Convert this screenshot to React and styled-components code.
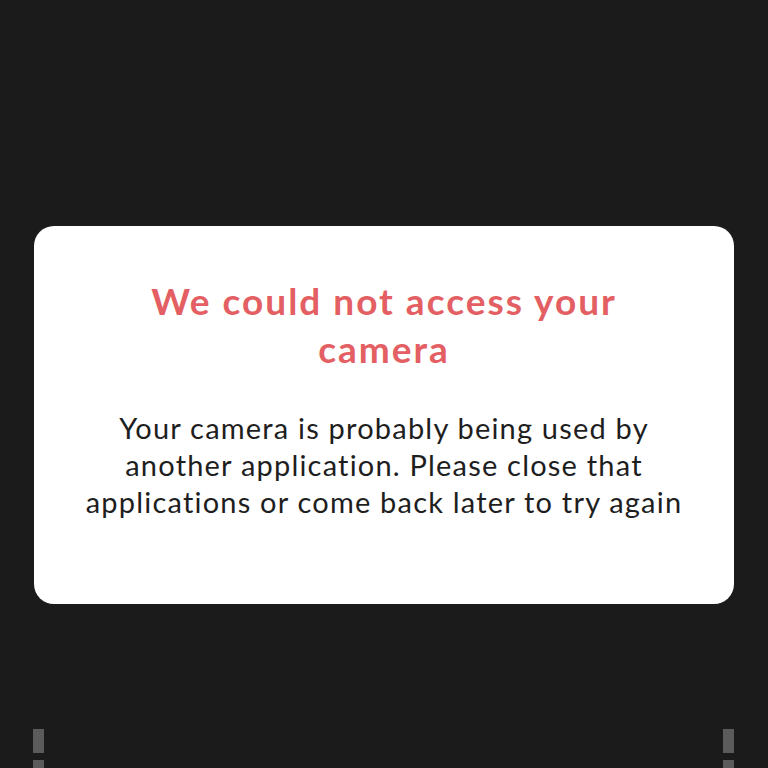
import React from 'react'
import styled, { createGlobalStyle } from 'styled-components'

const GlobalStyle = createGlobalStyle`
    html, body {
        margin: 0;
        padding: 0;
        background: #1b1b1b;
    }
`

const Screen = styled.main`
    height: 768px;
    overflow: hidden;
    background: #1b1b1b;
    display: flex;
    flex-direction: column;
    padding: 226px 34px 0 34px;
    box-sizing: border-box;
    font-family: Lato, 'Open Sans', sans-serif;
`

const Card = styled.section`
    flex-shrink: 0;
    background: #ffffff;
    border-radius: 20px;
    height: 378px;
    box-sizing: border-box;
    padding: 51px 0 0 0;
    text-align: center;
`

const Title = styled.h2`
    margin: 0;
    color: #e35f63;
    font-size: 37px;
    font-weight: 700;
    line-height: 48px;
    letter-spacing: 2px;
`

const Message = styled.p`
    margin: 36px 0 0 0;
    color: #1e1e1e;
    font-size: 29px;
    font-weight: 400;
    line-height: 37px;
    letter-spacing: 1.2px;
`

const GuideRow = styled.div`
    flex-shrink: 0;
    display: flex;
    justify-content: space-between;
    margin-top: 125px;
`

const Guide = styled.div`
    display: flex;
    flex-direction: column;
    gap: 7px;
    margin-left: ${props => props.$left ? '-1px' : '0'};
`

const Dash = styled.span`
    display: block;
    width: 11px;
    height: 24px;
    background: #5b5b5b;
`

const App = () => {
    return (
        <>
            <GlobalStyle />
            <Screen>
                <Card>
                    <Title>
                        We could not access your<br />camera
                    </Title>
                    <Message>
                        Your camera is probably being used by<br />
                        another application. Please close that<br />
                        applications or come back later to try again
                    </Message>
                </Card>
                <GuideRow>
                    <Guide $left>
                        <Dash />
                        <Dash />
                    </Guide>
                    <Guide>
                        <Dash />
                        <Dash />
                    </Guide>
                </GuideRow>
            </Screen>
        </>
    )
}

export default App
